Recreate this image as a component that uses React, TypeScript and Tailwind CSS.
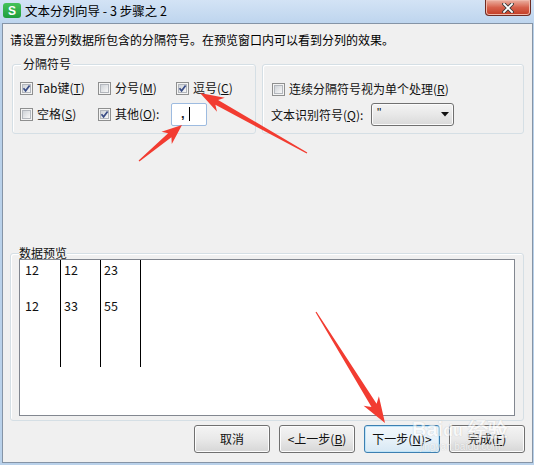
import React from "react";

function arrowPoints(tx: number, ty: number, px: number, py: number, L: number, W: number, w: number) {
  const dx = px - tx, dy = py - ty;
  const len = Math.hypot(dx, dy);
  const ux = dx / len, uy = dy / len;
  const nx = -uy, ny = ux;
  const bx = px - ux * L, by = py - uy * L;
  const nb = px - ux * L * 0.8, nby = py - uy * L * 0.8;
  const pts = [
    [tx + nx * 0.6, ty + ny * 0.6],
    [nb + nx * w, nby + ny * w],
    [bx + nx * W, by + ny * W],
    [px, py],
    [bx - nx * W, by - ny * W],
    [nb - nx * w, nby - ny * w],
    [tx - nx * 0.6, ty - ny * 0.6],
  ];
  return pts.map((p) => p.map((v) => v.toFixed(1)).join(",")).join(" ");
}

function CB({ checked = false }: { checked?: boolean }) {
  return (
    <span className="relative flex w-[13px] h-[13px] shrink-0 border border-[#8e8f8f] bg-[#f4f4f4] p-[1px]">
      <span className="flex-1 border border-[#b3b7bd] bg-gradient-to-br from-[#cfd3d8] to-[#f8f8f8]" />
      {checked && (
        <svg className="absolute inset-0" width="11" height="11" viewBox="0 0 11 11">
          <path d="M2.5 5.2 L4.6 7.8 L8.6 2.4" stroke="#3a4d86" strokeWidth="1.7" fill="none" />
        </svg>
      )}
    </span>
  );
}

function Item({ checked, children, w = "w-[78px]" }: { checked?: boolean; children: React.ReactNode; w?: string }) {
  return (
    <div className={`flex items-center ${w}`}>
      <CB checked={checked} />
      <span className="ml-[4px] whitespace-nowrap">{children}</span>
    </div>
  );
}

function Btn({ children, focus = false }: { children: React.ReactNode; focus?: boolean }) {
  return (
    <div
      className={`w-[76px] h-[28px] rounded-[3px] border flex items-center justify-center text-[12px] ${
        focus
          ? "border-[#3c7fb1] bg-gradient-to-b from-[#f2f8fc] via-[#e8f2f9] to-[#d7e8f4] shadow-[inset_0_0_0_1px_#bfe4f8]"
          : "border-[#707070] bg-gradient-to-b from-[#f4f4f4] via-[#e9e9e9] to-[#d6d6d6] shadow-[inset_0_0_0_1px_#fcfcfc]"
      }`}
    >
      {children}
    </div>
  );
}

export default function App() {
  return (
    <div className="relative w-[534px] h-[465px] overflow-hidden bg-[#b9d1ea] flex flex-col text-[#111] font-['Noto_Sans_CJK_SC','Noto_Sans',sans-serif] text-[12px]">
      {/* title bar */}
      <div className="h-[23px] shrink-0 flex items-start bg-gradient-to-b from-[#d3e3f5] to-[#bed5ee]">
        <div className="ml-[3px] mt-[3px] w-[18px] h-[15px] rounded-[3px] bg-gradient-to-b from-[#44c25a] to-[#1f9e3c] flex items-center justify-center">
          <span className="text-white text-[12px] leading-[12px] font-bold font-['Liberation_Sans',sans-serif]">S</span>
        </div>
        <span className="ml-[4px] leading-[22px] text-[12.5px] text-black">文本分列向导 - 3 步骤之 2</span>
        <div className="ml-auto mr-[3px] w-[46px] h-[16px] rounded-b-[4px] border border-t-0 border-[#6e2b22] bg-gradient-to-b from-[#eab1a3] via-[#d6604b] to-[#c23a22] flex items-center justify-center shadow-[inset_0_0_0_1px_#f0b8aa]">
          <svg width="12" height="10" viewBox="0 0 12 10">
            <path d="M2 1 L10 9 M10 1 L2 9" stroke="#3b3b3b" strokeWidth="3.6" strokeLinecap="square" />
            <path d="M2 1 L10 9 M10 1 L2 9" stroke="#ffffff" strokeWidth="1.8" strokeLinecap="square" />
          </svg>
        </div>
      </div>

      {/* client area */}
      <div className="flex-1 ml-[2px] mr-[1px] mb-[2px] border border-[#8594a6] bg-[#f0f0f0] flex flex-col">
        <div className="ml-[7px] mt-[8px] leading-[16px] text-black">请设置分列数据所包含的分隔符号。在预览窗口内可以看到分列的效果。</div>

        <div className="mt-[16px] ml-[9px] flex gap-[6px]">
          {/* left group */}
          <div className="relative w-[244px] h-[70px] border border-[#d5dfe5] rounded-[3px] shadow-[inset_1px_1px_0_#ffffff] pl-[7px] pt-[15px] flex flex-col">
            <span className="absolute -top-[8px] left-[8px] px-[2px] bg-[#f0f0f0] leading-[14px]">分隔符号</span>
            <div className="flex h-[16px] items-center">
              <Item checked>Tab键(<span className="underline">T</span>)</Item>
              <Item>分号(<span className="underline">M</span>)</Item>
              <Item checked>逗号(<span className="underline">C</span>)</Item>
            </div>
            <div className="flex h-[22px] items-center mt-[7px]">
              <Item>空格(<span className="underline">S</span>)</Item>
              <div className="flex items-center">
                <CB checked />
                <span className="ml-[4px] w-[56px] whitespace-nowrap">其他(<span className="underline">O</span>):</span>
              </div>
              <div className="w-[36px] h-[23px] border border-[#9dbbe0] rounded-[2px] bg-white flex items-center pl-[9px]">
                <span className="text-[13px] leading-[14px] font-bold text-[#222] font-['Liberation_Sans',sans-serif]">,</span>
                <span className="ml-[4px] w-[1px] h-[14px] bg-black" />
              </div>
            </div>
          </div>

          {/* right group */}
          <div className="w-[262px] h-[70px] border border-[#d5dfe5] rounded-[3px] shadow-[inset_1px_1px_0_#ffffff] pl-[9px] pt-[16px] flex flex-col">
            <div className="flex h-[16px] items-center">
              <CB />
              <span className="ml-[4px] whitespace-nowrap">连续分隔符号视为单个处理(<span className="underline">R</span>)</span>
            </div>
            <div className="flex h-[23px] items-center mt-[6px] -ml-[1px]">
              <span className="w-[100px] whitespace-nowrap">文本识别符号(<span className="underline">Q</span>):</span>
              <div className="w-[83px] h-[23px] rounded-[3px] border border-[#707070] bg-gradient-to-b from-[#f3f3f3] via-[#e8e8e8] to-[#d9d9d9] shadow-[inset_0_0_0_1px_#fbfbfb] flex items-center pl-[5px] pr-[4px]">
                <span className="leading-[12px] -mt-[4px] font-['Liberation_Sans',sans-serif]">"</span>
                <svg className="ml-auto" width="8" height="5" viewBox="0 0 8 5">
                  <path d="M0 0 L8 0 L4 4.5 Z" fill="#111" />
                </svg>
              </div>
            </div>
          </div>
        </div>

        {/* preview */}
        <div className="relative mt-[119px] ml-[7px] w-[514px] h-[168px] border border-[#d5dfe5] rounded-[3px] shadow-[inset_1px_1px_0_#ffffff] pl-[8px] pt-[5px]">
          <span className="absolute -top-[7px] left-[8px] bg-[#f0f0f0] leading-[12px]">数据预览</span>
          <div className="w-[496px] h-[157px] border border-[#828790] bg-white flex items-start text-[12.5px]">
            <div className="w-[41px] h-[107px] border-r border-black pl-[5px] pt-[1px] leading-[18px] flex flex-col">
              <span>12</span>
              <span>&nbsp;</span>
              <span>12</span>
            </div>
            <div className="w-[40px] h-[107px] border-r border-black pl-[3px] pt-[1px] leading-[18px] flex flex-col">
              <span>12</span>
              <span>&nbsp;</span>
              <span>33</span>
            </div>
            <div className="w-[40px] h-[107px] border-r border-black pl-[3px] pt-[1px] leading-[18px] flex flex-col">
              <span>23</span>
              <span>&nbsp;</span>
              <span>55</span>
            </div>
          </div>
        </div>

        {/* buttons */}
        <div className="mt-[4px] pr-[7px] flex justify-end gap-[9px]">
          <Btn>取消</Btn>
          <Btn>&lt;上一步(<span className="underline">B</span>)</Btn>
          <Btn focus>下一步(<span className="underline">N</span>)&gt;</Btn>
          <Btn>完成(<span className="underline">F</span>)</Btn>
        </div>
      </div>

      {/* watermark */}
      <div className="absolute left-[412px] top-[419px] flex flex-col items-center opacity-60 pointer-events-none">
        <span className="text-[20px] leading-[20px] font-bold text-white [text-shadow:0_0_1px_#9a9a9a] font-['Liberation_Sans',sans-serif]">Bai<span className="text-[16px]">du</span> 经验</span>
        <span className="text-[10px] leading-[11px] text-white [text-shadow:0_0_1px_#9a9a9a] font-['Liberation_Sans',sans-serif]">jingyan.baidu.com</span>
      </div>

      {/* annotation arrows */}
      <svg className="absolute inset-0 pointer-events-none" width="534" height="465" viewBox="0 0 534 465">
        <polygon points={arrowPoints(307, 153, 200, 93, 24, 8, 2.8)} fill="#f23c31" />
        <polygon points={arrowPoints(139, 161, 182, 125, 20, 8, 2.6)} fill="#f23c31" />
        <polygon points={arrowPoints(316, 312, 385, 423, 26, 9, 3)} fill="#f23c31" />
      </svg>
    </div>
  );
}
